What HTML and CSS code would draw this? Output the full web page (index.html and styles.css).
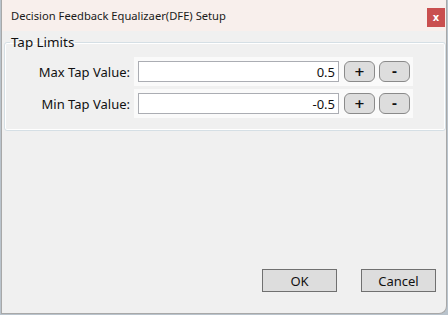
FILE: index.html
```html
<!DOCTYPE html>
<html>
<head>
<meta charset="utf-8">
<title>Decision Feedback Equalizaer(DFE) Setup</title>
<link rel="stylesheet" href="styles.css">
</head>
<body>
<div class="window">
  <div class="titlebar">
    <span class="title">Decision Feedback Equalizaer(DFE) Setup</span>
    <button class="close">x</button>
  </div>
  <div class="content">
    <fieldset class="group">
      <legend>Tap Limits</legend>
      <div class="row">
        <label for="max">Max Tap Value:</label>
        <div class="panel">
          <input type="text" id="max" value="0.5">
          <button class="step">+</button><button class="step">-</button>
        </div>
      </div>
      <div class="row">
        <label for="min">Min Tap Value:</label>
        <div class="panel">
          <input type="text" id="min" value="-0.5">
          <button class="step">+</button><button class="step">-</button>
        </div>
      </div>
    </fieldset>
    <div class="footer">
      <button class="btn">OK</button>
      <button class="btn">Cancel</button>
    </div>
  </div>
</div>
</body>
</html>
```

FILE: styles.css
```css
html, body {
  margin: 0;
  height: 100%;
  background: #b9c3cc;
  font-family: "Noto Sans", "Open Sans", sans-serif;
  color: #111;
}
* {
  box-sizing: border-box;
}
.window {
  width: 446px;
  height: 314px;
  margin-left: 1px;
  display: flex;
  flex-direction: column;
  background: #f0f0f0;
  border: 1px solid #a8a8a8;
  border-top: 0;
  border-radius: 0 0 8px 0;
  overflow: hidden;
}
.titlebar {
  height: 31px;
  background: #f8efec;
  display: flex;
  align-items: center;
  padding-left: 9px;
  padding-right: 1px;
}
.title {
  flex: 1;
  font-size: 11.2px;
  color: #1a1a1a;
}
.close {
  width: 18px;
  height: 19px;
  margin-top: 3px;
  padding: 0;
  border: 0;
  background: #c94f4f;
  color: #fff;
  font-family: "DejaVu Sans", sans-serif;
  font-weight: bold;
  font-size: 10px;
  line-height: 17px;
}
.content {
  flex: 1;
  display: flex;
  flex-direction: column;
  padding: 0 0 0 2px;
}
.group {
  margin: 2px 0 0 0;
  padding: 3px 8px 12px 5px;
  border: 1px solid #d5dfe5;
  border-radius: 3px;
  box-shadow: inset 0 0 0 1px #fff;
}
.group legend {
  padding: 0 1px;
  font-size: 13.4px;
  color: #111;
}
.row {
  display: flex;
  align-items: center;
  margin-top: 3px;
}
.row label {
  width: 124px;
  padding-right: 4px;
  text-align: right;
  font-size: 13px;
}
.panel {
  display: flex;
  align-items: center;
  gap: 4px;
  padding: 4px 3px 4px 4px;
  background: #fafafa;
}
.panel input {
  width: 201px;
  height: 21px;
  margin-right: 1px;
  padding: 0 3px;
  border: 1px solid #abadb3;
  background: #fff;
  text-align: right;
  font-family: inherit;
  font-size: 13px;
  color: #111;
}
.step {
  width: 31px;
  height: 21px;
  padding: 0;
  border: 1px solid #8a8a8a;
  border-radius: 6px;
  background: #dddddd;
  font-family: "DejaVu Sans", sans-serif;
  font-weight: bold;
  font-size: 13px;
  color: #111;
}
.footer {
  margin-top: auto;
  display: flex;
  justify-content: flex-end;
  gap: 24px;
  padding: 0 10px 21px 0;
}
.btn {
  width: 75px;
  height: 23px;
  padding: 0;
  border: 1px solid #707070;
  background: #dddddd;
  font-family: inherit;
  font-size: 13px;
  color: #111;
}
```
